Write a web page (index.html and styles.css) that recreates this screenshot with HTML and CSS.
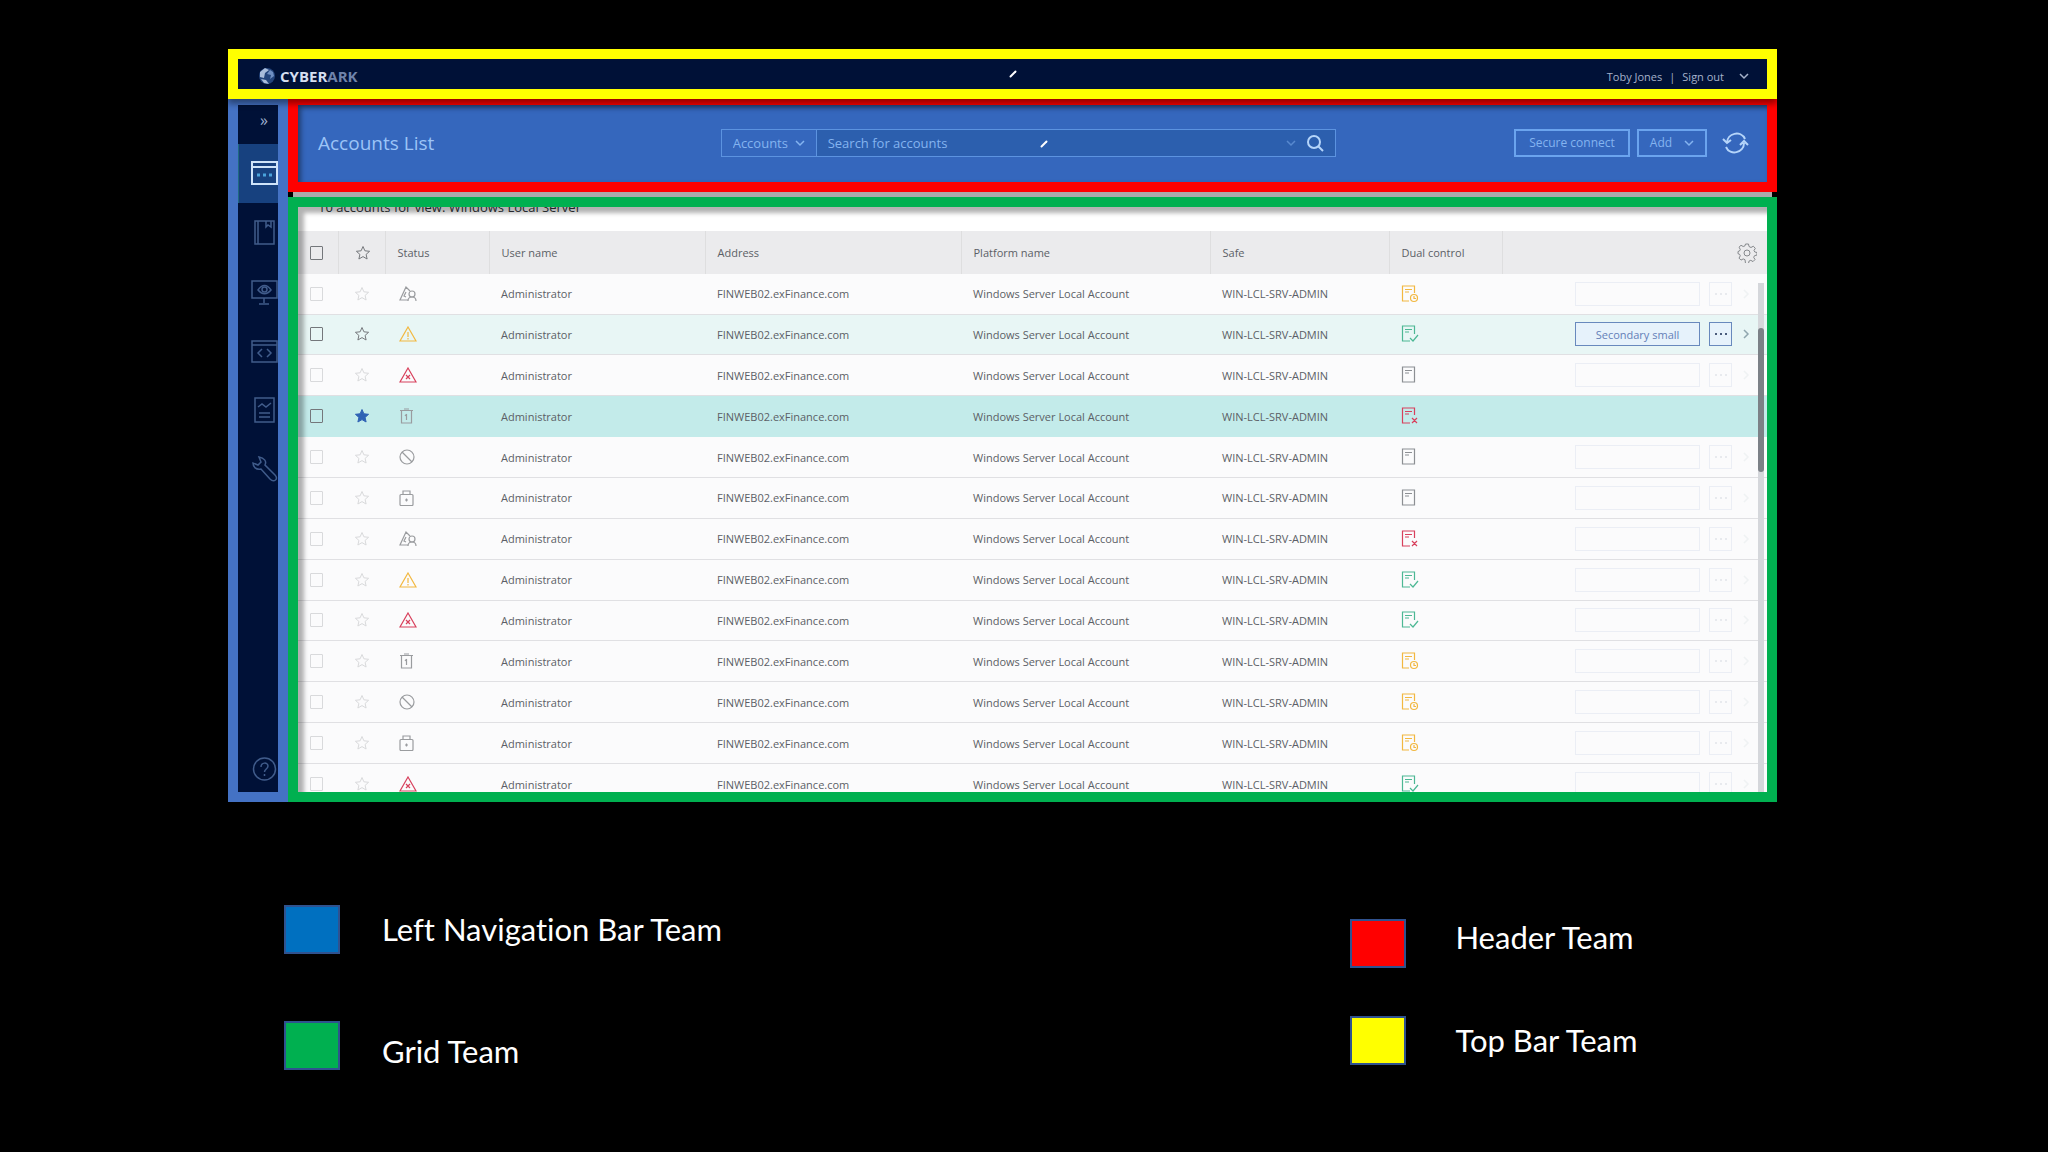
FILE: index.html
```html
<!DOCTYPE html>
<html lang="en">
<head>
    <meta charset="UTF-8">
    <meta name="viewport" content="width=device-width, initial-scale=1.0">
    <title>Accounts List - Teams</title>
    <link rel="stylesheet" href="styles.css">
</head>
<body>
    <!-- Shared icons -->
    <svg class="sprite" aria-hidden="true">
        <symbol id="chevron" viewBox="0 0 10 10"><path d="M1 3l4 4 4-4"/></symbol>
        <symbol id="arrow" viewBox="0 0 10 10"><path d="M3 1l4 4-4 4"/></symbol>
        <symbol id="star" viewBox="0 0 16 16"><path d="M8 1.500l1.900 4.300 4.700.5-3.500 3.100 1 4.600L8 11.600 3.900 14l1-4.600L1.400 6.300l4.700-.5z"/></symbol>
        <symbol id="warn" viewBox="0 0 18 16"><path d="M9 1l8 14H1zM9 6v5M9 12v1.500"/></symbol>
        <symbol id="error" viewBox="0 0 18 16"><path d="M9 1l8 14H1zM7 8l4 4M11 8l-4 4"/></symbol>
        <symbol id="userwarn" viewBox="0 0 18 16"><path d="M9 14H1L7 1l4 4M7 6l-2 4 2 1M9 15c0-3 1-4 4-4s4 1 4 4"/><circle cx="13" cy="8" r="3"/></symbol>
        <symbol id="trash" viewBox="0 0 18 16"><path d="M1 2.500h13M5 1h5M2.500 2.500V15h10V2.500M7.500 6v6M6 8l1.500-2"/></symbol>
        <symbol id="ban" viewBox="0 0 18 16"><circle cx="8" cy="8" r="7"/><path d="M3 3l10 10"/></symbol>
        <symbol id="lock" viewBox="0 0 18 16"><rect x="1" y="4.500" width="13" height="11" rx="1"/><path d="M4 4.500V1h7v3.500M6 10h3M7.500 8.500v3"/></symbol>
        <symbol id="doc" viewBox="0 0 18 18"><path d="M1.500 1h12v15h-12zM4 4.500h7M4 7h4"/></symbol>
        <symbol id="doc-ok" viewBox="0 0 18 18"><path d="M13.500 9V1h-12v15H9M4 4.500h7M4 7h4M9 13l3 3 5-6"/></symbol>
        <symbol id="doc-no" viewBox="0 0 18 18"><path d="M13.500 8V1h-12v15H9M4 4.500h7M4 7h4M11 11l5 5M16 11l-5 5"/></symbol>
        <symbol id="doc-wait" viewBox="0 0 18 18"><path d="M13.500 8V1h-12v15H8M4 4.500h7M4 7h4M13 11v2.500h2"/><circle cx="13" cy="13" r="3.500"/></symbol>
    </svg>

    <div class="app">
        <div class="topbar">
            <div class="logo">
                <svg width="18" height="20" viewBox="0 0 18 20">
                    <circle cx="9" cy="10" r="8" fill="#24457c"/>
                    <path d="M2 6l5-4 4 2-4 3-1 5-4-1zM3 13l5 1 3 4-5-1z" fill="#a9bddb"/>
                    <path d="M9 8l4 1-1 4 4-3-1-4-3-2z" fill="#6f8fc2"/>
                </svg>
                <span>CYBER<em>ARK</em></span>
            </div>
            <svg class="spark" viewBox="0 0 8 8"><path d="M1.500 6.500l5-5"/></svg>
            <div class="user">
                <span>Toby Jones</span><span>|</span><a href="#">Sign out</a>
                <svg class="icon small"><use href="#chevron"/></svg>
            </div>
        </div>

        <div class="body">
            <nav class="sidebar">
                <button class="expand" aria-label="Expand menu">»</button>
                <a href="#" class="active" aria-label="Accounts"><svg viewBox="0 0 27 26"><path d="M1 1h25v22H1zM1 6h25"/><path d="M6 14h4M12 14h4M18 14h4" stroke="#4aa3dc" stroke-width="3" stroke-dasharray="3 1"/></svg></a>
                <a href="#" aria-label="Policies"><svg viewBox="0 0 27 26"><path d="M4 1h19v23H4zM7 1v23M15 1v6l2-2 3 2V1"/></svg></a>
                <a href="#" aria-label="Monitoring"><svg viewBox="0 0 27 26"><path d="M1 2h25v17H1zM13 19v5M8 25h10M7 11c4-6 9-6 13 0-4 5-9 5-13 0z"/><circle cx="13.500" cy="10.500" r="2.500"/></svg></a>
                <a href="#" aria-label="Applications"><svg viewBox="0 0 27 26"><path d="M1 3h25v21H1zM1 7h25M11 11l-4 4 4 4M16 11l4 4-4 4"/></svg></a>
                <a href="#" aria-label="Reports"><svg viewBox="0 0 27 26"><path d="M4 1h19v24H4zM7 10l4-3 4 3 5-4M8 16h11M8 20h11"/></svg></a>
                <a href="#" aria-label="Settings"><svg viewBox="0 0 27 26"><path d="M8 1c5 1 8 4 6 8l10 10c4 4-1 8-5 4L10 13c-5 1-8-2-8-6l5 2 3-3z"/></svg></a>
                <a href="#" class="help" aria-label="Help"><svg viewBox="0 0 27 26"><circle cx="13.500" cy="13" r="11"/><path d="M10 11c0-5 7-5 7-1 0 3-3.500 3-3.500 6M13.500 18v2"/></svg></a>
            </nav>

            <main>
                <header class="header">
                    <h1>Accounts List</h1>
                    <form class="search">
                        <div class="scope">
                            <select aria-label="Search in"><option>Accounts</option></select>
                            <svg class="icon small"><use href="#chevron"/></svg>
                        </div>
                        <div class="query">
                            <input type="text" placeholder="Search for accounts" aria-label="Search for accounts">
                            <svg class="spark" viewBox="0 0 8 8"><path d="M1.500 6.500l5-5"/></svg>
                            <svg class="icon small dim"><use href="#chevron"/></svg>
                            <button type="button" aria-label="Search"><svg width="18" height="18" viewBox="0 0 18 18"><circle cx="8" cy="8" r="6"/><path d="M12.500 12.500L17 17"/></svg></button>
                        </div>
                    </form>
                    <div class="actions">
                        <button class="outline connect">Secure connect</button>
                        <button class="outline add">Add <svg class="icon small"><use href="#chevron"/></svg></button>
                        <button class="refresh" aria-label="Refresh"><svg width="27" height="24" viewBox="0 0 27 24"><path d="M5 12c0-10 14-13 18-4M22 12c0 10-14 13-18 4M1 8l4 4 4-3M18 14l4-4 4 4"/></svg></button>
                    </div>
                </header>
                <div class="divider"></div>

                <section class="grid">
                    <p class="caption">10 accounts for view: Windows Local Server</p>
                    <table>
                        <thead>
                            <tr>
                                <th class="c-check"><input type="checkbox" aria-label="Select all"></th>
                                <th class="c-star"><svg class="star"><use href="#star"/></svg></th>
                                <th class="c-status">Status</th>
                                <th class="c-user">User name</th>
                                <th class="c-address">Address</th>
                                <th class="c-platform">Platform name</th>
                                <th class="c-safe">Safe</th>
                                <th class="c-dual">Dual control</th>
                                <th class="c-tools"><button class="gear" aria-label="Settings"><svg width="20" height="20" viewBox="0 0 20 20"><circle cx="10" cy="10" r="3"/><path d="M8.500 1h3l.5 2.500 2 1 2.300-1.300 2 2.100-1.300 2.200.8 1.500 2.200.5v2.500l-2.500.7-.8 1.600 1.300 2.200-2 2.100-2.200-1.300-1.800.8-.5 2.400h-3L8 16.700l-1.800-.8L4 17.100l-2-2 1.300-2.300-.8-1.600L1 10.700V8.500l1.500-.5.8-1.600L2 4.200l2-1.900 2.200 1.200L8 2.800z"/></svg></button></th>
                            </tr>
                        </thead>
                        <tbody id="rows"></tbody>
                    </table>
                    <div class="scrollbar"><div class="thumb"></div></div>
                </section>
            </main>
        </div>
    </div>

    <div class="legend">
        <ul>
            <li><span class="swatch blue"></span>Left Navigation Bar Team</li>
            <li class="low"><span class="swatch green"></span>Grid Team</li>
        </ul>
        <ul class="right">
            <li class="high"><span class="swatch red"></span>Header Team</li>
            <li><span class="swatch yellow"></span>Top Bar Team</li>
        </ul>
    </div>

    <script>
        // status icon, dual control icon, row state
        var rows = [
            ['userwarn', 'doc-wait', ''],
            ['warn', 'doc-ok', 'hover'],
            ['error', 'doc', ''],
            ['trash', 'doc-no', 'selected'],
            ['ban', 'doc', ''],
            ['lock', 'doc', ''],
            ['userwarn', 'doc-no', ''],
            ['warn', 'doc-ok', ''],
            ['error', 'doc-ok', ''],
            ['trash', 'doc-wait', ''],
            ['ban', 'doc-wait', ''],
            ['lock', 'doc-wait', ''],
            ['error', 'doc-ok', '']
        ];

        document.getElementById('rows').innerHTML = rows.map(function (row) {
            var label = row[2] === 'hover' ? 'Secondary small' : '';
            return '<tr class="' + row[2] + '">' +
                '<td><input type="checkbox" aria-label="Select account"></td>' +
                '<td><svg class="star"><use href="#star"/></svg></td>' +
                '<td><svg class="state ' + row[0] + '"><use href="#' + row[0] + '"/></svg></td>' +
                '<td>Administrator</td>' +
                '<td>FINWEB02.exFinance.com</td>' +
                '<td>Windows Server Local Account</td>' +
                '<td>WIN-LCL-SRV-ADMIN</td>' +
                '<td><svg class="dual ' + row[1] + '"><use href="#' + row[1] + '"/></svg></td>' +
                '<td><div class="tools">' +
                '<button class="secondary" aria-label="Secondary action">' + label + '</button>' +
                '<button class="more" aria-label="More"><i></i><i></i><i></i></button>' +
                '<svg class="icon small"><use href="#arrow"/></svg>' +
                '</div></td></tr>';
        }).join('');
    </script>
</body>
</html>
```
FILE: styles.css
```css
* {
    box-sizing: border-box;
}

body {
    margin: 0;
    background: #000;
    font-family: 'Open Sans', sans-serif;
    font-size: 11px;
    color: #5b5f66;
}

button, input, select {
    font: inherit;
    color: inherit;
    margin: 0;
    padding: 0;
    border: 0;
    background: none;
}

a {
    color: inherit;
    text-decoration: none;
}

svg {
    display: block;
    fill: none;
    stroke: currentColor;
}

.sprite {
    position: absolute;
    width: 0;
    height: 0;
}

.icon.small {
    width: 10px;
    height: 10px;
    flex: none;
    stroke-width: 1.5;
}

.spark {
    width: 8px;
    height: 8px;
    stroke: #fff;
    stroke-width: 2;
    stroke-linecap: round;
}

.app {
    margin: 49px 271px 0 228px;
}

/* Top bar */
.topbar {
    position: relative;
    z-index: 1;
    display: flex;
    align-items: center;
    justify-content: space-between;
    height: 50px;
    padding: 4px 18px 0 20px;
    border: 10px solid #ff0;
    background: #001137;
    box-shadow: 0 5px 6px rgba(0, 0, 0, 0.4);
}

.logo {
    display: flex;
    align-items: center;
    gap: 4px;
    font-size: 15px;
    font-weight: bold;
    color: #d5dff0;
}

.logo svg {
    stroke: none;
}

.logo em {
    font-style: normal;
    color: #6f83ab;
}

.topbar .spark {
    position: absolute;
    left: 50%;
    top: 11px;
    margin-left: 6px;
}

.user {
    display: flex;
    align-items: center;
    gap: 7px;
    color: #a5b2cb;
}

.user .icon {
    margin-left: 8px;
}

.body {
    display: flex;
}

/* Left navigation */
.sidebar {
    display: flex;
    flex-direction: column;
    width: 60px;
    border: 10px solid #4472c4;
    border-top-width: 6px;
    background: #001137;
    color: #405c8b;
}

.sidebar a {
    display: flex;
    align-items: center;
    height: 59px;
    padding-left: 13px;
}

.sidebar svg {
    width: 27px;
    height: 26px;
    stroke-width: 1.5;
}

.sidebar .expand {
    height: 39px;
    padding: 0 0 10px 12px;
    font-size: 16px;
    color: #9fb0cf;
}

.sidebar .active {
    background: #17417f;
    border-left: 1px solid #1f6a80;
    padding-left: 12px;
    color: #cfe4fa;
}

.sidebar .active svg {
    stroke-width: 2;
}

.sidebar .help {
    margin-top: auto;
    height: 46px;
}

main {
    flex: 1;
    min-width: 0;
}

/* Header */
.header {
    display: grid;
    grid-template-columns: 28% 43% 1fr;
    align-items: center;
    height: 93px;
    padding: 0 18px 2px 20px;
    border: 10px solid #f00;
    border-top-width: 6px;
    background: #3567bd;
    box-shadow: inset 3px 3px 5px rgba(0, 0, 0, 0.4);
    color: #84b4f0;
}

.header h1 {
    margin: 0;
    font-size: 19px;
    font-weight: normal;
    color: #9cc4f7;
}

.search {
    display: flex;
    height: 28px;
    margin: 0 -2px 0 2px;
    border: 1px solid #5c93e0;
    font-size: 13px;
}

.scope {
    display: flex;
    align-items: center;
    width: 95px;
    padding: 0 11px;
    border-right: 1px solid #5c93e0;
}

.scope select {
    flex: 1;
    min-width: 0;
    appearance: none;
}

.query {
    position: relative;
    display: flex;
    align-items: center;
    gap: 10px;
    flex: 1;
    padding: 0 11px;
    background: #2c5fae;
}

.query input {
    flex: 1;
    outline: none;
}

.query input::placeholder {
    color: #84b4f0;
    opacity: 1;
}

.query .spark {
    position: absolute;
    left: 43%;
    top: 10px;
}

.query button {
    color: #b5d5fa;
}

.query button svg {
    stroke-width: 2;
}

.dim {
    opacity: 0.5;
}

.actions {
    display: flex;
    align-items: center;
    justify-content: flex-end;
    gap: 7px;
}

.outline {
    display: flex;
    align-items: center;
    justify-content: center;
    gap: 12px;
    height: 28px;
    border: 2px solid #6ba4ee;
    font-size: 12px;
}

.connect {
    width: 116px;
}

.add {
    width: 70px;
}

.refresh {
    margin-left: 8px;
    color: #b5d5fa;
}

.refresh svg {
    stroke-width: 2;
}

.divider {
    height: 5px;
    margin: 0 5px;
    background: #ababab;
}

/* Accounts grid */
.grid {
    position: relative;
    height: 605px;
    border: 10px solid #00b050;
    background: #fbfbfc;
    overflow: hidden;
}

.grid::after {
    content: '';
    position: absolute;
    inset: 0;
    box-shadow: inset 6px 6px 4px rgba(0, 0, 0, 0.3);
    pointer-events: none;
}

.caption {
    height: 24px;
    margin: 0;
    padding-left: 20px;
    font-size: 13px;
    /* first line is scrolled half out of view */
    line-height: 0;
    color: #33363a;
    background: #fff;
}

table {
    width: 100%;
    height: 574px;
    table-layout: fixed;
    border-collapse: collapse;
}

th, td {
    padding: 0 0 0 12px;
    text-align: left;
    white-space: nowrap;
}

th {
    height: 43px;
    font-weight: normal;
    background: #ebebed;
    border-right: 1px solid #dededf;
}

th:last-child {
    border-right: 0;
}

td {
    border-bottom: 1px solid #e0e0e3;
}

.c-check { width: 40px; }
.c-star { width: 47px; }
.c-status { width: 104px; }
.c-user { width: 216px; }
.c-address { width: 256px; }
.c-platform { width: 249px; }
.c-safe { width: 179px; }
.c-dual { width: 113px; }

input[type=checkbox] {
    display: block;
    appearance: none;
    width: 13px;
    height: 14px;
    border: 1px solid #74777b;
    border-radius: 1px;
}

.star {
    width: 16px;
    height: 16px;
    margin-left: 4px;
    color: #75787c;
}

td input[type=checkbox],
td .star {
    opacity: 0.25;
}

.state {
    width: 18px;
    height: 16px;
    margin-left: 2px;
    color: #9a9c9f;
}

.dual {
    width: 18px;
    height: 18px;
    color: #8c8f93;
}

.state, .dual {
    stroke-width: 1.2;
}

.warn, .doc-wait {
    color: #f2b840;
}

.error, .doc-no {
    color: #d8405c;
}

.doc-ok {
    color: #4cb894;
}

.gear {
    display: block;
    margin: 0 10px 0 auto;
    color: #85888c;
}

.tools {
    display: flex;
    align-items: center;
    justify-content: flex-end;
    gap: 9px;
    padding-right: 16px;
    opacity: 0.1;
}

.secondary {
    width: 125px;
    height: 24px;
    border: 1px solid #6889bd;
    color: #6480b8;
}

.hover .secondary,
.hover .more {
    background: #e6f2fb;
}

.more {
    display: flex;
    align-items: center;
    justify-content: center;
    gap: 3px;
    width: 23px;
    height: 24px;
    border: 1px solid #6889bd;
}

.more i {
    width: 2px;
    height: 2px;
    background: #4a5c7c;
}

.tools .icon {
    color: #8fa6ae;
}

.hover td {
    background: #e8f6f5;
}

.selected td {
    background: #c3ebea;
    border-color: #c3ebea;
}

.hover input[type=checkbox],
.hover .star,
.hover .tools,
.selected input[type=checkbox],
.selected .star {
    opacity: 1;
}

.selected .star {
    color: #2f62b5;
    fill: #2f62b5;
}

.selected .tools {
    visibility: hidden;
}

.scrollbar {
    position: absolute;
    top: 76px;
    right: 3px;
    bottom: 0;
    width: 6px;
    padding-top: 45px;
    background: #d5d7db;
}

.thumb {
    height: 144px;
    border-radius: 3px;
    background: #7c8187;
}

/* Team legend */
.legend {
    display: grid;
    grid-template-columns: 5fr 2fr;
    margin: 103px 271px 0 284px;
    font-family: Lato, sans-serif;
    font-size: 31px;
    font-variant-ligatures: none;
    line-height: 37px;
    color: #fff;
}

.legend ul {
    display: flex;
    flex-direction: column;
    gap: 67px;
    margin: 0;
    padding: 0;
    list-style: none;
}

.legend .right {
    gap: 48px;
    padding-top: 14px;
}

.legend li {
    display: flex;
    align-items: center;
    gap: 42px;
}

.legend .right li {
    gap: 49px;
}

.legend .low {
    align-items: flex-end;
}

.legend .high {
    align-items: flex-start;
}

.swatch {
    width: 56px;
    height: 49px;
    border: 2px solid #2f528f;
}

.blue { background: #0070c0; }
.green { background: #00b050; }
.red { background: #f00; }
.yellow { background: #ff0; }
```
